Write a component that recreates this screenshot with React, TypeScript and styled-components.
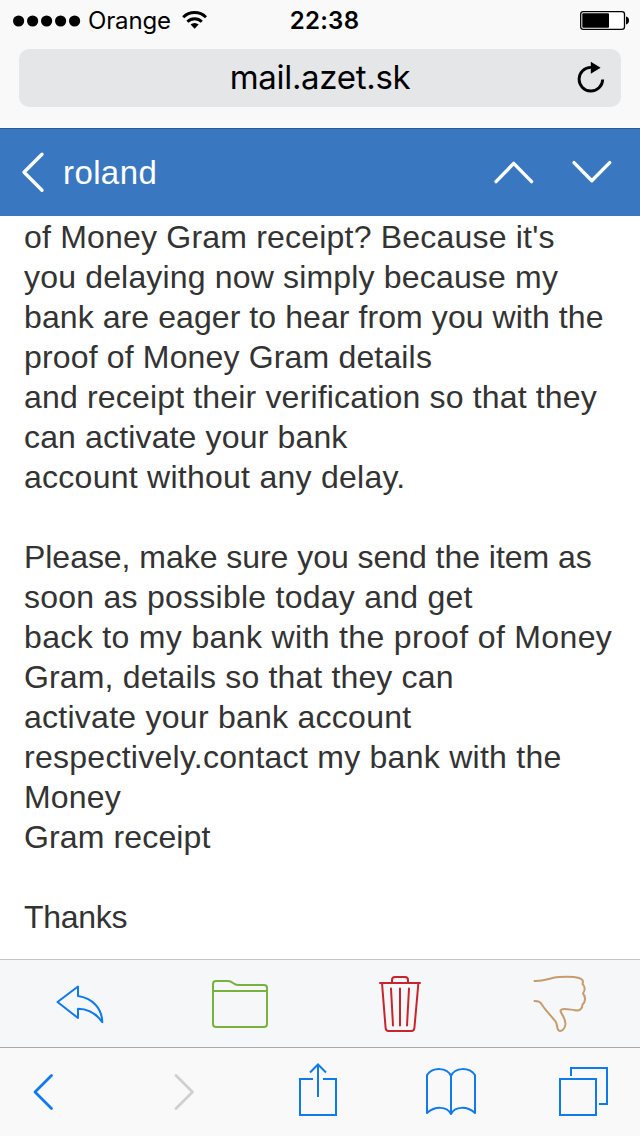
import React from "react";
import styled, { createGlobalStyle } from "styled-components";

const GlobalStyle = createGlobalStyle`
  * { box-sizing: border-box; }
  html, body { margin: 0; padding: 0; background: #fff; }
  svg { display: block; }
`;

const Screen = styled.div`
  width: 640px;
  height: 1136px;
  display: flex;
  flex-direction: column;
  overflow: hidden;
  background: #fff;
  font-family: "Liberation Sans", Arial, sans-serif;
`;

const BrowserTop = styled.div`
  height: 128px;
  background: #f9f9f9;
  font-family: Inter, sans-serif;
  color: #000;
`;

const StatusBar = styled.div`
  height: 41px;
  display: grid;
  grid-template-columns: 220px 200px 220px;
  align-items: center;
`;

const Carrier = styled.div`
  display: flex;
  align-items: center;
  padding-left: 13px;
  font-size: 24px;
  line-height: 41px;
`;

const CarrierName = styled.span`
  width: 94px;
  padding-left: 7px;
  letter-spacing: -0.15px;
`;

const Clock = styled.div`
  text-align: center;
  padding-left: 9px;
  font-size: 24px;
  font-weight: 600;
  line-height: 41px;
  letter-spacing: 0.3px;
`;

const BatterySlot = styled.div`
  display: flex;
  justify-content: flex-end;
  padding-right: 10px;
`;

const AddressField = styled.div`
  margin: 8px 19px 0;
  height: 58px;
  border-radius: 10px;
  background: #e5e6e8;
  display: grid;
  grid-template-columns: 60px 1fr 60px;
  align-items: center;
`;

const Address = styled.div`
  height: 58px;
  text-align: center;
  font-size: 33px;
  line-height: 56px;
  letter-spacing: -0.3px;
`;

const MailHeader = styled.header`
  height: 88px;
  background: #3977c0;
  border-top: 1px solid #2b5a96;
  display: flex;
  align-items: center;
  color: #fff;
  flex: none;
`;

const Sender = styled.div`
  flex: 1;
  font-size: 33px;
  line-height: 86px;
  letter-spacing: 0.4px;
`;

const Message = styled.main`
  height: 743px;
  padding: 1px 0 0 24px;
  color: #333;
  font-size: 32px;
  line-height: 40px;
`;

const Line = styled.div<{ $spacing: number }>`
  height: 40px;
  white-space: nowrap;
  letter-spacing: ${(p) => p.$spacing}px;
`;

const MailToolbar = styled.div`
  height: 88px;
  border-top: 1px solid #c4c5c7;
  background: #f6f7f9;
  display: grid;
  grid-template-columns: repeat(4, 160px);
`;

const BrowserToolbar = styled.div`
  height: 89px;
  border-top: 1px solid #a9a9ab;
  background: #f9f9f9;
  display: grid;
  grid-template-columns: 110px 140px 135px 135px 120px;
`;

const Glyph = styled.svg<{ $width?: number }>`
  fill: none;
  stroke: currentColor;
  stroke-width: ${(p) => p.$width ?? 2};
  stroke-linecap: round;
  stroke-linejoin: round;
`;

const Sharp = styled(Glyph)`
  color: #0f79ee;
  stroke-linecap: butt;
  stroke-linejoin: miter;
`;

const lines: [string, number][] = [
  ["of Money Gram receipt? Because it's", 0.2],
  ["you delaying now simply because my", 0.17],
  ["bank are eager to hear from you with the", 0.08],
  ["proof of Money Gram details", 0.16],
  ["and receipt their verification so that they", 0.17],
  ["can activate your bank", 0.15],
  ["account without any delay.", 0.26],
  ["", 0],
  ["Please, make sure you send the item as", -0.04],
  ["soon as possible today and get", 0.25],
  ["back to my bank with the proof of Money", 0.35],
  ["Gram, details so that they can", 0.15],
  ["activate your bank account", 0.26],
  ["respectively.contact my bank with the", 0.27],
  ["Money", 0.2],
  ["Gram receipt", 0.13],
  ["", 0],
  ["Thanks", -0.28],
];

export default function App() {
  return (
    <>
      <GlobalStyle />
      <Screen>
        <BrowserTop>
          <StatusBar>
            <Carrier>
              <svg width="68" height="12" viewBox="0 0 68 12">
                {[5.6, 19.6, 33.6, 47.6, 61.6].map((x) => (
                  <circle key={x} cx={x} cy="6" r="5.6" />
                ))}
              </svg>
              <CarrierName>Orange</CarrierName>
              <svg width="40" height="41" viewBox="175 0 40 41">
                <g fill="none" stroke="#000" strokeWidth="2.9">
                  <path d="M183.2 17.2a16.3 16.3 0 0 1 22.8 0" />
                  <path d="M187.4 21.7a10.2 10.2 0 0 1 14.4 0" />
                </g>
                <path d="M194.6 28.8l-4-4.2a5.8 5.8 0 0 1 8 0z" />
              </svg>
            </Carrier>
            <Clock>22:38</Clock>
            <BatterySlot>
              <svg width="50" height="41" viewBox="580 0 50 41">
                <rect x="580.7" y="11.7" width="43.8" height="17.6" rx="2.6" fill="#fff" stroke="#000" strokeWidth="1.3" />
                <rect x="582.3" y="13.2" width="26.7" height="14.6" rx="1" />
                <path d="M626 16.6q3 .6 3 3.9t-3 3.9z" />
              </svg>
            </BatterySlot>
          </StatusBar>
          <AddressField>
            <span />
            <Address>mail.azet.sk</Address>
            <svg width="60" height="58" viewBox="561 49 60 58">
              <path d="M602.7 79.5A11.8 11.8 0 1 1 591 67.4" fill="none" stroke="#000" strokeWidth="2.9" />
              <path d="M590.8 61.8l9.8 6-9.8 6z" />
            </svg>
          </AddressField>
        </BrowserTop>

        <MailHeader>
          <Glyph width="63" height="87" viewBox="0 129 63 87" $width={3.4}>
            <path d="M42 154.2L24 172.2l18 18" />
          </Glyph>
          <Sender>roland</Sender>
          <Glyph width="78" height="87" viewBox="475 129 78 87" $width={3.4}>
            <path d="M496 181.6l17.7-18.2 17.9 18.2" />
          </Glyph>
          <Glyph width="87" height="87" viewBox="553 129 87 87" $width={3.4}>
            <path d="M574 162.6l17.8 18.1 17.9-18.1" />
          </Glyph>
        </MailHeader>

        <Message>
          {lines.map(([text, spacing], i) => (
            <Line key={i} $spacing={spacing}>{text}</Line>
          ))}
        </Message>

        <MailToolbar>
          <Glyph width="160" height="87" viewBox="0 960 160 87" color="#0f79ee">
            <path d="M57.5 1002L78 986.5V996C92 998 102 1008 102.3 1022.3C96 1013 88 1009 78 1008.8V1018Z" />
          </Glyph>
          <Glyph width="160" height="87" viewBox="160 960 160 87" color="#77b23c">
            <path d="M213 1024V984q0-3 3-3H228c5 0 5 4 10 4H264q3 0 3 3V1024q0 3-3 3H216q-3 0-3-3ZM213 991H267" />
          </Glyph>
          <Glyph width="160" height="87" viewBox="320 960 160 87" color="#c7252b">
            <path d="M380 983H420M392 983V980q0-3 3-3H405q3 0 3 3V983M382 983L385.6 1028q.3 3 3 3H411.4q2.7 0 3-3L418.4 983M391 988.5L393 1025.5M400 988.5V1025.5M409 988.5L407 1025.5" />
          </Glyph>
          <Glyph width="160" height="87" viewBox="480 960 160 87" color="#c69c6d">
            <path d="M534.5 981C545 981.5 550 977.5 559 977C568 976.4 575 976.8 579 978C583 979.2 583.5 981.500 582.500 984C585 986 585.5 990 583 993.5C586 997 585.5 1002 582.5 1004.5C582.5 1009 579.5 1011 575 1010.2C569 1009.5 562 1007.5 560.5 1010.5C560 1013 565.5 1017 565.5 1024C565 1029 562 1031 560 1031C556 1031 558 1024 555.5 1021.5C551 1015.5 546 1011 542.5 1005.5C540 1001 538 1001 534.5 1001" />
          </Glyph>
        </MailToolbar>

        <BrowserToolbar>
          <Glyph width="110" height="88" viewBox="0 1048 110 88" color="#0f79ee" $width={2.8}>
            <path d="M51.5 1075.5L35 1092l16.5 16.5" />
          </Glyph>
          <Glyph width="140" height="88" viewBox="110 1048 140 88" color="#cfcfcf" $width={2.8}>
            <path d="M176 1075.5L192.5 1092l-16.5 16.5" />
          </Glyph>
          <Sharp width="135" height="88" viewBox="250 1048 135 88">
            <path d="M313 1079H300V1115H336V1079H323M318 1097V1065M310 1072.5L318 1064.5L326 1072.5" />
          </Sharp>
          <Sharp width="135" height="88" viewBox="385 1048 135 88">
            <path d="M427 1113V1075C433 1067 447 1067 451 1076C455 1067 469 1067 475 1075V1113C467 1106 455 1106 451 1114C447 1106 435 1106 427 1113ZM451 1076V1114" strokeLinejoin="round" />
          </Sharp>
          <Sharp width="120" height="88" viewBox="520 1048 120 88">
            <path d="M560 1079H596V1115H560ZM571 1076V1068H607V1104H599" />
          </Sharp>
        </BrowserToolbar>
      </Screen>
    </>
  );
}
